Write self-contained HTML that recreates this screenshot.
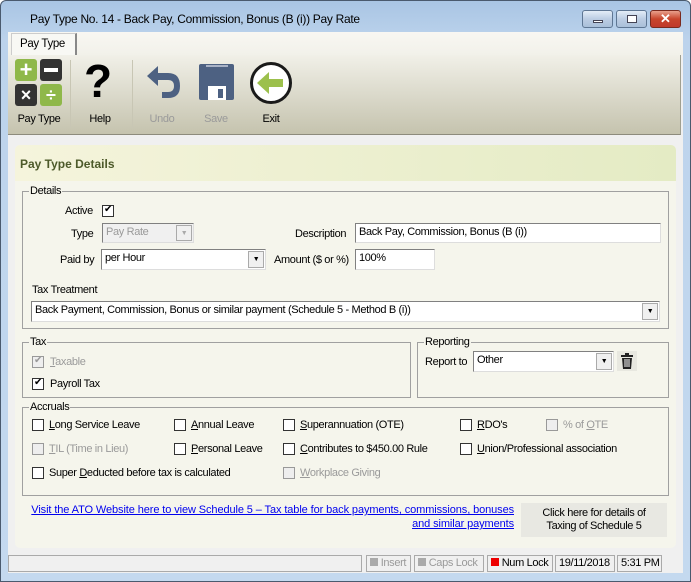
<!DOCTYPE html>
<html><head><style>
*{box-sizing:border-box;margin:0;padding:0}
body{width:691px;height:582px;overflow:hidden;background:#fff;font-family:"Liberation Sans",sans-serif;font-size:11px;letter-spacing:-0.35px;color:#000;position:relative;white-space:nowrap}
.a{position:absolute}
.win{left:0;top:0;width:691px;height:582px;background:linear-gradient(#a9c5e4,#bcd3ec 40px,#c4d9ef);border:1px solid #4a5a6e;border-radius:6px 6px 0 0}
.title{left:30px;top:12px;font-size:12px;letter-spacing:-0.3px;color:#000}
.wb{top:10px;height:18px;border:1px solid #5e7693;border-radius:3px;background:linear-gradient(#e4edf7,#bccde3 50%,#a9bfd9)}
.client{left:8px;top:32px;width:675px;height:541px;background:#f0f0f0}
.tb{left:8px;top:55px;width:673px;height:80px;background:linear-gradient(#f1f0e8,#c5c3ae);border-bottom:1px solid #8d8b7c;border-right:1px solid #a0a090}
.lbl{font-size:11px;text-align:center}
.panel{left:15px;top:145px;width:661px;height:403px;background:#f5f5ec;border-radius:5px}
.ph{left:15px;top:145px;width:661px;height:36px;background:linear-gradient(90deg,#f5f4dc,#e4ebc4);border-radius:5px 5px 0 0}
.grp{border:1px solid #a0a0a0}
.gl{background:#f5f5ec;padding:0 1px;top:-7px;left:6px;position:absolute;font-size:11px}
.cb{width:12px;height:12px;border:1px solid #333;background:#fff;position:absolute}
.cb.d{border-color:#999;background:#eee}
.chk::after{content:"✔";position:absolute;left:1px;top:-2px;font-size:10px;color:#000}
.cb.d.chk::after{color:#999}
.inp{background:#fff;border:1px solid #808080;border-right-color:#ddd;border-bottom-color:#ddd;padding:2px 3px;font-size:11px}
.dd{position:absolute;right:1px;top:1px;width:16px;bottom:1px;background:#f0f0f0;border:1px solid #aaa;font-size:7px;text-align:center;line-height:15px}
.gray{color:#9a9a9a}
.sb{top:555px;height:17px;border:1px solid #aaa;background:#f0f0f0;font-size:11px;line-height:15px;padding:0 3px;overflow:hidden}
</style></head><body>
<div class="a win"></div>
<div class="a title">Pay Type No. 14 - Back Pay, Commission, Bonus (B (i)) Pay Rate</div>
<div class="a wb" style="left:582px;width:31px"><div class="a" style="left:10px;top:9px;width:10px;height:3px;background:#fff;border:1px solid #445"></div></div>
<div class="a wb" style="left:616px;width:31px"><div class="a" style="left:10px;top:4px;width:10px;height:8px;border:1px solid #445;background:#fff"></div></div>
<div class="a wb" style="left:650px;width:31px;background:linear-gradient(#e8a08c,#c8452c 50%,#c0392b);border-color:#7a2a1e;color:#fff;font-weight:bold;font-size:13px;text-align:center;line-height:16px;letter-spacing:0">✕</div>
<div class="a client"></div>
<div class="a" style="left:8px;top:32px;width:675px;height:23px;background:linear-gradient(#f8f7f2,#f2f1ea)"></div>
<div class="a" style="left:11px;top:33px;width:66px;height:23px;background:#f8f8f4;border:1px solid #ccc;border-right:2px solid #888;border-bottom:none;font-size:11.5px;padding:4px 0 0 8px">Pay Type</div>
<div class="a tb"></div>
<div class="a" style="left:15px;top:59px;width:22px;height:22px;background:#8fb84a;border-radius:3px;color:#fff;font-size:22px;font-weight:bold;text-align:center;line-height:21px;letter-spacing:0">+</div>
<div class="a" style="left:40px;top:59px;width:22px;height:22px;background:#333;border-radius:3px"><div class="a" style="left:4px;top:9px;width:14px;height:4px;background:#fff"></div></div>
<div class="a" style="left:15px;top:84px;width:22px;height:22px;background:#333;border-radius:3px;color:#fff;font-size:18px;font-weight:bold;text-align:center;line-height:22px;letter-spacing:0">×</div>
<div class="a" style="left:40px;top:84px;width:22px;height:22px;background:#8fb84a;border-radius:3px;color:#fff;font-size:18px;font-weight:bold;text-align:center;line-height:22px;letter-spacing:0">÷</div>
<div class="a lbl" style="left:12px;top:113px;width:54px">Pay Type</div>
<div class="a" style="left:70px;top:60px;width:1px;height:68px;background:#c8c6b4"></div>
<div class="a" style="left:84px;top:56px;font-size:46px;font-weight:bold;letter-spacing:0;line-height:50px">?</div>
<div class="a lbl" style="left:85px;top:113px;width:30px">Help</div>
<div class="a" style="left:132px;top:60px;width:1px;height:68px;background:#c8c6b4"></div>
<svg class="a" style="left:144px;top:62px" width="40" height="40" viewBox="0 0 40 40"><path d="M14 4 L3 14 L14 24 L14 18 L24 18 Q30 18 30 24 Q30 30 24 30 L18 30 L18 36 L24 36 Q36 36 36 24 Q36 11 24 11 L14 11 Z" fill="#4d6182"/></svg>
<div class="a lbl gray" style="left:146px;top:113px;width:32px">Undo</div>
<svg class="a" style="left:198px;top:62px" width="38" height="40" viewBox="0 0 38 40"><rect x="1" y="2" width="35" height="36" rx="2" fill="#4d6182"/><rect x="8" y="3" width="22" height="2" fill="#a8b2c6"/><rect x="10" y="24" width="18" height="14" fill="#fff"/><rect x="20" y="27" width="5" height="9" fill="#4d6182"/></svg>
<div class="a lbl gray" style="left:200px;top:113px;width:32px">Save</div>
<svg class="a" style="left:249px;top:61px" width="44" height="44" viewBox="0 0 44 44"><circle cx="22" cy="22" r="19.5" fill="#fff" stroke="#1a1a1a" stroke-width="3"/><path d="M8 22 L20 11 L20 18 L34 18 L34 26 L20 26 L20 33 Z" fill="#9cc04c"/></svg>
<div class="a lbl" style="left:256px;top:113px;width:30px">Exit</div>

<div class="a panel"></div>
<div class="a ph"></div>
<div class="a" style="left:20px;top:157px;font-size:12px;font-weight:bold;color:#4d5a2a;letter-spacing:0">Pay Type Details</div>

<div class="a grp" style="left:22px;top:191px;width:647px;height:138px"><span class="gl">Details</span></div>
<div class="a" style="left:65px;top:205px">Active</div>
<div class="a cb chk" style="left:102px;top:205px"></div>
<div class="a" style="left:71px;top:228px">Type</div>
<div class="a inp gray" style="left:102px;top:223px;width:92px;height:20px;background:#f0f0f0">Pay Rate<div class="dd" style="color:#aaa">▼</div></div>
<div class="a" style="left:295px;top:228px">Description</div>
<div class="a inp" style="left:355px;top:223px;width:306px;height:20px">Back Pay, Commission, Bonus (B (i))</div>
<div class="a" style="left:60px;top:254px">Paid by</div>
<div class="a inp" style="left:101px;top:249px;width:165px;height:21px">per Hour<div class="dd">▼</div></div>
<div class="a" style="left:274px;top:254px">Amount ($ or %)</div>
<div class="a inp" style="left:355px;top:249px;width:80px;height:21px">100%</div>
<div class="a" style="left:32px;top:284px">Tax Treatment</div>
<div class="a inp" style="left:31px;top:301px;width:629px;height:21px">Back Payment, Commission, Bonus or similar payment (Schedule 5 - Method B (i))<div class="dd">▼</div></div>

<div class="a grp" style="left:22px;top:342px;width:389px;height:56px"><span class="gl">Tax</span></div>
<div class="a cb d chk" style="left:32px;top:356px"></div>
<div class="a gray" style="left:50px;top:356px"><u>T</u>axable</div>
<div class="a cb chk" style="left:32px;top:378px"></div>
<div class="a" style="left:50px;top:378px">Payroll Tax</div>

<div class="a grp" style="left:417px;top:342px;width:252px;height:56px"><span class="gl">Reporting</span></div>
<div class="a" style="left:425px;top:356px">Report to</div>
<div class="a inp" style="left:473px;top:351px;width:141px;height:21px">Other<div class="dd">▼</div></div>
<div class="a" style="left:617px;top:351px;width:20px;height:20px;background:#e8e8e0"></div>
<svg class="a" style="left:620px;top:353px" width="14" height="16" viewBox="0 0 14 16"><rect x="1" y="2" width="12" height="2" fill="#222"/><rect x="5" y="0" width="4" height="2" fill="#222"/><path d="M2 5 H12 L11 16 H3 Z" fill="#222"/><rect x="4.5" y="6" width="1" height="8" fill="#fff"/><rect x="6.5" y="6" width="1" height="8" fill="#fff"/><rect x="8.5" y="6" width="1" height="8" fill="#fff"/></svg>

<div class="a grp" style="left:22px;top:407px;width:647px;height:89px"><span class="gl">Accruals</span></div>
<div class="a cb" style="left:32px;top:419px"></div><div class="a" style="left:49px;top:419px"><u>L</u>ong Service Leave</div>
<div class="a cb" style="left:174px;top:419px"></div><div class="a" style="left:191px;top:419px"><u>A</u>nnual Leave</div>
<div class="a cb" style="left:283px;top:419px"></div><div class="a" style="left:300px;top:419px"><u>S</u>uperannuation (OTE)</div>
<div class="a cb" style="left:460px;top:419px"></div><div class="a" style="left:477px;top:419px"><u>R</u>DO's</div>
<div class="a cb d" style="left:546px;top:419px"></div><div class="a gray" style="left:563px;top:419px">% of <u>O</u>TE</div>
<div class="a cb d" style="left:32px;top:443px"></div><div class="a gray" style="left:49px;top:443px"><u>T</u>IL (Time in Lieu)</div>
<div class="a cb" style="left:174px;top:443px"></div><div class="a" style="left:191px;top:443px"><u>P</u>ersonal Leave</div>
<div class="a cb" style="left:283px;top:443px"></div><div class="a" style="left:300px;top:443px"><u>C</u>ontributes to $450.00 Rule</div>
<div class="a cb" style="left:460px;top:443px"></div><div class="a" style="left:477px;top:443px"><u>U</u>nion/Professional association</div>
<div class="a cb" style="left:32px;top:467px"></div><div class="a" style="left:49px;top:467px">Super <u>D</u>educted before tax is calculated</div>
<div class="a cb d" style="left:283px;top:467px"></div><div class="a gray" style="left:300px;top:467px"><u>W</u>orkplace Giving</div>

<div class="a" style="left:20px;top:503px;width:494px;text-align:right;color:#0000ee;text-decoration:underline;line-height:14px;letter-spacing:-0.1px">Visit the ATO Website here to view Schedule 5 – Tax table for back payments, commissions, bonuses <br>and similar payments</div>
<div class="a" style="left:521px;top:503px;width:146px;height:34px;background:#e8e8e2;text-align:center;line-height:13px;padding-top:4px">Click here for details of<br>Taxing of Schedule 5</div>

<div class="a sb" style="left:8px;width:354px"></div>
<div class="a sb gray" style="left:366px;width:45px"><span style="display:inline-block;width:8px;height:8px;background:#aaa"></span> Insert</div>
<div class="a sb gray" style="left:414px;width:70px"><span style="display:inline-block;width:8px;height:8px;background:#aaa"></span> Caps Lock</div>
<div class="a sb" style="left:487px;width:66px"><span style="display:inline-block;width:8px;height:8px;background:#e00"></span> Num Lock</div>
<div class="a sb" style="left:555px;width:60px">19/11/2018</div>
<div class="a sb" style="left:617px;width:45px">5:31 PM</div>
</body></html>
